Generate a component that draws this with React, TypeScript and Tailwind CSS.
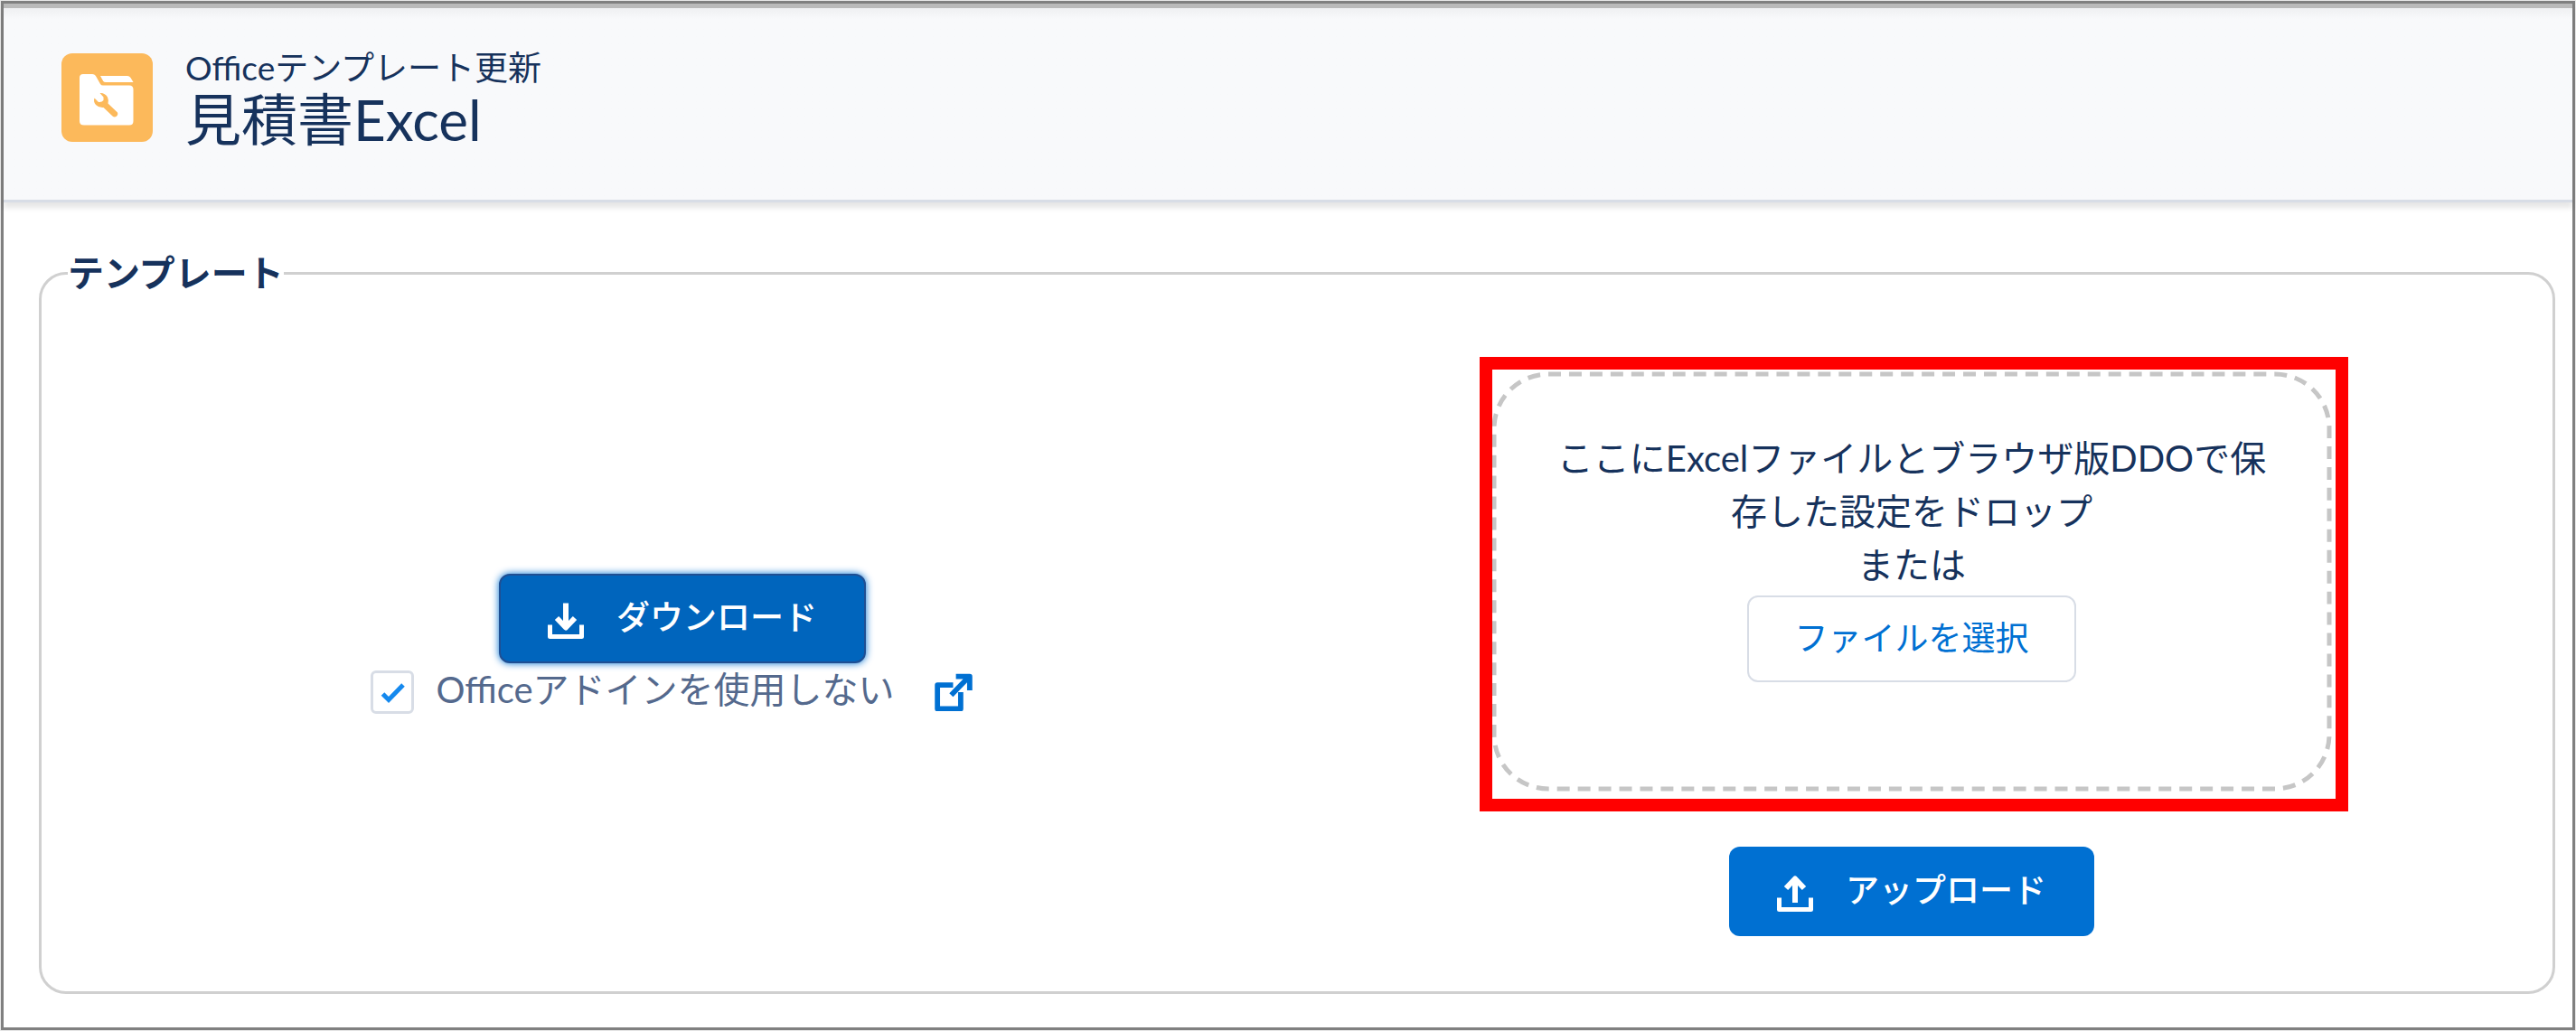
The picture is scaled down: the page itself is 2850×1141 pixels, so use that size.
import { useState } from "react";

function FolderIcon() {
  return (
    <svg viewBox="0 0 101 98" className="h-full w-full" aria-hidden="true">
      <path
        d="M24 23H34Q37 23 38.500 26L43 34Q44 35.500 46 35.500H75Q79.500 35.500 79.500 40V75Q79.500 79.500 75 79.500H25Q20 79.500 20 75V27Q20 23 24 23Z"
        fill="#fff"
      />
      <path d="M43 25H73Q75 25 76.500 27L79.500 32H49Q47 32 46 30.500Z" fill="#fff" />
      <path
        d="M42.500 44Q48 43.500 51 48.500Q52.500 52 51.500 55.500L62 65.500Q63 68 60.500 70Q58.500 71 56.500 69.500L46.500 60Q41.500 60.500 38 57Q35 53.500 36.500 49.500L41 54Q44.500 54.500 46.500 52V48.500Z"
        fill="#fcb95b"
      />
    </svg>
  );
}

function DownloadIcon() {
  return (
    <svg viewBox="0 0 40 40" className="mt-1 size-10" fill="none" stroke="currentColor" strokeWidth="5" strokeLinejoin="round" aria-hidden="true">
      <path d="M20 0.500V26M10 17L20 27.500L30 17" strokeWidth="6" />
      <path d="M2.500 24.500V37.500H37.500V24.500" />
    </svg>
  );
}

function UploadIcon() {
  return (
    <svg viewBox="0 0 40 40" className="mt-1 size-10" fill="none" stroke="currentColor" strokeWidth="5" strokeLinejoin="round" aria-hidden="true">
      <path d="M20 30V5M10 14L20 3.500L30 14" strokeWidth="6" />
      <path d="M2.500 24.500V37.500H37.500V24.500" />
    </svg>
  );
}

function NewWindowIcon() {
  return (
    <svg viewBox="0 0 40 40" className="size-[42px]" fill="none" stroke="currentColor" strokeWidth="5.500" aria-hidden="true">
      <path d="M19.500 12.500H3V37.500H27.500V20" strokeLinejoin="round" />
      <path d="M17.500 23L36 4M22.500 3.500H37V18" strokeLinejoin="round" />
      <path d="M31 3L37 9V3Z" fill="currentColor" stroke="none" />
    </svg>
  );
}

export default function App() {
  const [skipAddin, setSkipAddin] = useState(true);

  return (
    <div className="flex min-h-screen flex-col border border-[#e8e8e8] bg-white font-['Lato','Noto_Sans_CJK_JP',sans-serif] text-[40px] leading-[59px] text-[#16325c]">
      <div className="flex grow flex-col border-3 border-[#808080]">
        {/* Header */}
        <header className="flex items-start gap-9 border-t-5 border-b-3 border-t-[#bababa] border-b-[#d8dde6] bg-linear-to-b from-[#eff0f2] to-[#f8f9fb] to-[12px] px-16 pt-11 pb-[54px] shadow-[0_6px_6px_rgba(0,0,0,0.1)]">
          <div className="mt-1.5 h-[98px] w-[101px] shrink-0 overflow-hidden rounded-xl bg-[#fcb95b]">
            <FolderIcon />
          </div>
          <div>
            <p className="text-[37px] leading-[44px]">Officeテンプレート更新</p>
            <h1 className="text-[62px] leading-[70px]">見積書Excel</h1>
          </div>
        </header>

        <main className="pt-[49px] pr-[19px] pb-9 pl-[39px]">
          <fieldset className="rounded-[30px] border-3 border-[#d0d0d0] px-[29px] pb-[61px]">
            <legend className="font-bold">テンプレート</legend>
            <div className="grid grid-cols-2 items-center pt-20">
              {/* Download */}
              <div className="flex flex-col items-center pb-5">
                <button
                  type="button"
                  className="flex h-[99px] w-[406px] items-center justify-center gap-9 rounded-xl border-2 border-[#1f4f93] bg-[#0065bd] font-medium text-white shadow-[0_0_9px_#0070d2]"
                >
                  <DownloadIcon />
                  <span className="mb-1 text-[37px]">ダウンロード</span>
                </button>
                <div className="flex items-center pr-6 text-[#54698d]">
                  <label className="flex items-center gap-6">
                    <span className="relative mt-1 flex">
                      <input
                        type="checkbox"
                        checked={skipAddin}
                        onChange={(e) => setSkipAddin(e.target.checked)}
                        className="size-12 appearance-none rounded-md border-3 border-[#d8dde6] bg-white"
                      />
                      {skipAddin && (
                        <svg
                          viewBox="0 0 48 48"
                          className="pointer-events-none absolute inset-0 size-12"
                          fill="none"
                          stroke="#1589ee"
                          strokeWidth="5"
                          aria-hidden="true"
                        >
                          <path d="M13.500 26L20 32.500L36 16" />
                        </svg>
                      )}
                    </span>
                    Officeアドインを使用しない
                  </label>
                  <a href="#help" aria-label="ヘルプ" className="mt-1 ml-11 text-[#0070d2]">
                    <NewWindowIcon />
                  </a>
                </div>
              </div>

              {/* Upload */}
              <div className="flex flex-col items-center gap-[62px]">
                <div className="relative flex h-[463px] w-full max-w-[928px] flex-col items-center px-16 pt-[66px] text-center">
                  <svg className="pointer-events-none absolute inset-0 h-full w-full overflow-visible" fill="none" aria-hidden="true">
                    <rect
                      x="2"
                      y="2"
                      rx="60"
                      className="h-[calc(100%-4px)] w-[calc(100%-4px)]"
                      stroke="#c6c6c6"
                      strokeWidth="5"
                      strokeDasharray="14 9"
                      pathLength={2668}
                    />
                  </svg>
                  <div className="pointer-events-none absolute -top-[17px] -right-[19px] -bottom-[23px] -left-[14px] border-14 border-[#ff0000]" />
                  <p>
                    ここにExcelファイルとブラウザ版DDOで保存した設定をドロップ
                    <br />
                    または
                  </p>
                  <button
                    type="button"
                    className="relative mt-1 h-[96px] w-[364px] rounded-xl border-2 border-[#d8dde6] bg-white pb-1 text-[37px] text-[#0070d2]"
                  >
                    ファイルを選択
                  </button>
                </div>
                <button
                  type="button"
                  className="flex h-[99px] w-[404px] items-center justify-center gap-9 rounded-xl bg-[#0070d2] font-medium text-white"
                >
                  <UploadIcon />
                  <span className="mb-1 text-[37px]">アップロード</span>
                </button>
              </div>
            </div>
          </fieldset>
        </main>
      </div>
    </div>
  );
}
